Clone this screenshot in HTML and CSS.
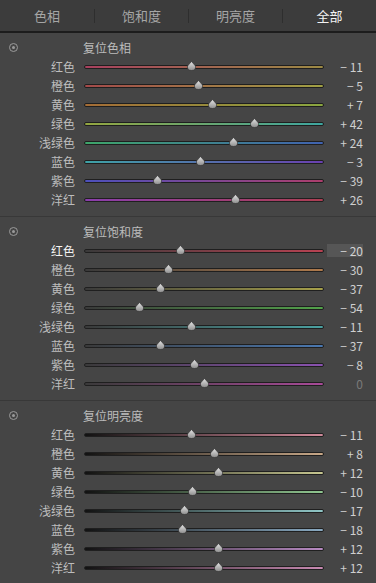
FILE: index.html
```html
<!DOCTYPE html>
<html lang="zh">
<head>
    <meta charset="UTF-8">
    <meta name="viewport" content="width=device-width, initial-scale=1.0">
    <title>HSL</title>
    <link rel="stylesheet" href="styles.css">
</head>
<body>
    <div class="tabs">
        <div class="tab">色相</div>
        <div class="tab">饱和度</div>
        <div class="tab">明亮度</div>
        <div class="tab active">全部</div>
    </div>

    <div class="section" data-kind="h" data-title="复位色相" data-values="-11,-5,7,42,24,-3,-39,26"></div>
    <div class="section" data-kind="s" data-title="复位饱和度" data-values="-20,-30,-37,-54,-11,-37,-8,0"></div>
    <div class="section" data-kind="l" data-title="复位明亮度" data-values="-11,8,12,-10,-17,-18,12,12"></div>

    <script>
        const names = ['红色', '橙色', '黄色', '绿色', '浅绿色', '蓝色', '紫色', '洋红'];
        const keys = ['red', 'orange', 'yellow', 'green', 'aqua', 'blue', 'purple', 'magenta'];

        function fmt(v) {
            if (v === 0) return '0';
            return (v < 0 ? '− ' : '+ ') + Math.abs(v);
        }

        const thumb = '<svg class="thumb-svg" width="11" height="10" viewBox="0 0 11 10">' +
            '<defs><linearGradient id="tg" x1="0" y1="0" x2="0" y2="1">' +
            '<stop offset="0" stop-color="#e4e4e4"/><stop offset="1" stop-color="#8e8e8e"/></linearGradient></defs>' +
            '<path d="M5.5 0.5 L9.5 5 Q10 9.5 5.5 9.5 Q1 9.5 1.5 5 Z" fill="url(#tg)" stroke="#2a2a2a" stroke-width="0.6"/></svg>';

        document.querySelectorAll('.section').forEach(sec => {
            const kind = sec.dataset.kind;
            const values = sec.dataset.values.split(',').map(Number);
            let html = `<div class="head"><span class="target"></span><span class="reset">${sec.dataset.title}</span></div>`;
            values.forEach((v, i) => {
                const selected = kind === 's' && i === 0;
                html += `
                    <div class="row${selected ? ' selected' : ''}">
                        <div class="label">${names[i]}</div>
                        <div class="track-wrap">
                            <div class="track ${kind}-${keys[i]}"></div>
                            <div class="thumb" style="left: ${50 + v / 2}%">${thumb}</div>
                        </div>
                        <div class="value${v === 0 ? ' zero' : ''}">${fmt(v)}</div>
                    </div>`;
            });
            sec.innerHTML = html;
        });
    </script>
</body>
</html>
```
FILE: styles.css
```css
body {
    margin: 0;
    width: 376px;
    height: 583px;
    overflow: hidden;
    background-color: #454545;
    font-family: "Noto Sans CJK SC", "Noto Sans", sans-serif;
    font-size: 12px;
    color: #bdbdbd;
}
.tabs {
    display: grid;
    grid-template-columns: repeat(4, 1fr);
    height: 31px;
    background-color: #3c3c3c;
    border-bottom: 2px solid #1c1c1c;
    align-items: center;
}
.tab {
    text-align: center;
    font-size: 13px;
    color: #a6a6a6;
    line-height: 14px;
    border-left: 1px solid #2e2e2e;
}
.tab:first-child {
    border-left: none;
}
.tab.active {
    color: #f2f2f2;
}
.section {
    padding: 5px 0 7px;
    border-bottom: 1px solid #383838;
}
.section:last-child {
    border-bottom: none;
}
.head {
    display: flex;
    align-items: center;
    height: 19px;
}
.target {
    width: 9px;
    height: 9px;
    border: 1px solid #9a9a9a;
    border-radius: 50%;
    margin-left: 9px;
    position: relative;
    box-sizing: border-box;
}
.target::after {
    content: "";
    position: absolute;
    left: 2px;
    top: 2px;
    width: 3px;
    height: 3px;
    border-radius: 50%;
    background-color: #9a9a9a;
}
.reset {
    margin-left: 65px;
    color: #bcbcbc;
}
.row {
    display: grid;
    grid-template-columns: 75px 240px 30px;
    column-gap: 9px;
    height: 19px;
    align-items: center;
}
.track-wrap {
    position: relative;
    height: 19px;
    display: flex;
    align-items: center;
}
.track {
    width: 100%;
    height: 2px;
    border: 1px solid #1f1f1f;
    border-radius: 2px;
}
.label {
    text-align: right;
    color: #bdbdbd;
    line-height: 19px;
}
.value {
    text-align: right;
    color: #cfcfcf;
    line-height: 19px;
}
.value.zero {
    color: #7a7a7a;
}
.row.selected .label {
    color: #f4f4f4;
}
.row.selected .value {
    background-color: #565656;
    line-height: 13px;
    margin-left: -6px;
    color: #d4d4d4;
}
.thumb {
    position: absolute;
    top: 4px;
    width: 11px;
    height: 10px;
    margin-left: -5px;
}
.thumb-svg {
    display: block;
}

/* hue */
.h-red { background: linear-gradient(to right, #a8405e, #9c8a44); }
.h-orange { background: linear-gradient(to right, #a44a4a, #a0a044); }
.h-yellow { background: linear-gradient(to right, #a46c36, #8aa640); }
.h-green { background: linear-gradient(to right, #94a640, #3ea6a0); }
.h-aqua { background: linear-gradient(to right, #3ea66a, #4062b0); }
.h-blue { background: linear-gradient(to right, #3ea2a6, #6a40b0); }
.h-purple { background: linear-gradient(to right, #4c50bc, #ac3e6c); }
.h-magenta { background: linear-gradient(to right, #8a3eac, #ac3e52); }

/* saturation */
.s-red { background: linear-gradient(to right, #3a3a3a, #b84252); }
.s-orange { background: linear-gradient(to right, #3a3a3a, #ae7a4c); }
.s-yellow { background: linear-gradient(to right, #3a3a3a, #a6a04a); }
.s-green { background: linear-gradient(to right, #3a3a3a, #52a24a); }
.s-aqua { background: linear-gradient(to right, #3a3a3a, #4aa0a0); }
.s-blue { background: linear-gradient(to right, #3a3a3a, #4a78b0); }
.s-purple { background: linear-gradient(to right, #3a3a3a, #8a52b0); }
.s-magenta { background: linear-gradient(to right, #3a3a3a, #a84a98); }

/* luminance */
.l-red { background: linear-gradient(to right, #121212, #d08a9a); }
.l-orange { background: linear-gradient(to right, #121212, #c8a888); }
.l-yellow { background: linear-gradient(to right, #121212, #c6c690); }
.l-green { background: linear-gradient(to right, #121212, #90c690); }
.l-aqua { background: linear-gradient(to right, #121212, #90c6c6); }
.l-blue { background: linear-gradient(to right, #121212, #8aaac2); }
.l-purple { background: linear-gradient(to right, #121212, #b88ac2); }
.l-magenta { background: linear-gradient(to right, #121212, #c88ab2); }
```
